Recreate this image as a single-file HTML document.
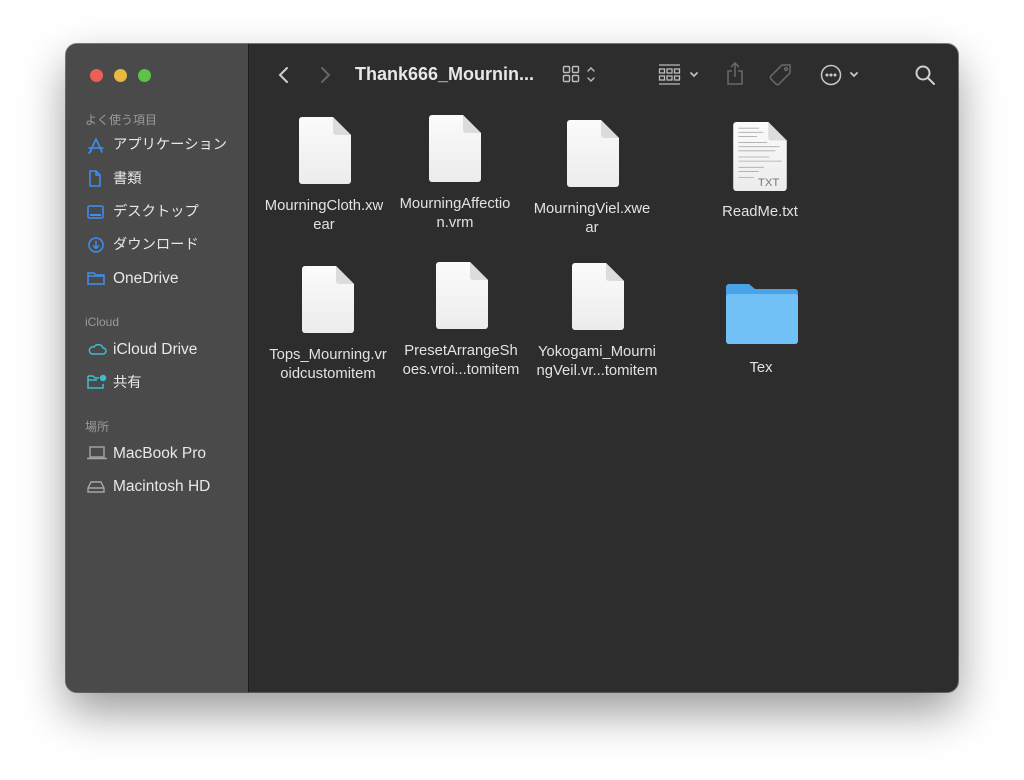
<!DOCTYPE html>
<html><head><meta charset="utf-8"><style>
*{margin:0;padding:0;box-sizing:border-box}
body{width:1024px;height:780px;background:#fff;position:relative;overflow:hidden;font-family:"Liberation Sans","Noto Sans CJK JP",sans-serif}
.win{position:absolute;left:66px;top:44px;width:892px;height:648px;border-radius:11px;background:#2d2d2d;overflow:hidden;box-shadow:0 20px 45px rgba(0,0,0,.4),0 0 0 1px rgba(0,0,0,.5)}
.side{position:absolute;left:0;top:0;width:183px;height:648px;background:#4a4a4a;border-right:1px solid #1c1c1c}
.dot{position:absolute;top:25px;width:13px;height:13px;border-radius:50%}
.sec{position:absolute;left:19px;font-size:12px;color:#9a9a9a}
.it{position:absolute;left:47px;font-size:15.5px;color:#e8e8e8;line-height:18px}
.jp{font-size:14.3px}
.ic{position:absolute;left:21px}
.lab{position:absolute;width:140px;text-align:center;font-size:14.8px;line-height:18.5px;color:#e2e2e2}
.file{position:absolute;width:52px;height:67px}
</style></head><body>
<div class="win">
<div class="side">
<div class="dot" style="left:24px;background:#ec5f57"></div>
<div class="dot" style="left:48px;background:#e9b83f"></div>
<div class="dot" style="left:72px;background:#5bc347"></div>
<div class="sec" style="top:67px">よく使う項目</div>
<svg class="ic" style="top:93px" width="18" height="18" viewBox="0 0 18 18" fill="none" stroke="#3d8ff0" stroke-width="1.6" stroke-linecap="round"><path d="M9 2L3 15M9 2l6 13M2 11h14M4 14l-2 2"/></svg>
<div class="it jp" style="top:92px">アプリケーション</div>
<svg class="ic" style="top:126px" width="16" height="18" viewBox="0 0 16 18" fill="none" stroke="#3d8ff0" stroke-width="1.5"><path d="M3 1h6l4 4v11H3zM9 1v4h4"/></svg>
<div class="it jp" style="top:126px">書類</div>
<svg class="ic" style="top:160px" width="18" height="16" viewBox="0 0 18 16" fill="none" stroke="#3d8ff0" stroke-width="1.5"><rect x="1" y="2" width="15" height="12" rx="1.5"/><path d="M3 11h11" stroke-width="2"/></svg>
<div class="it jp" style="top:159px">デスクトップ</div>
<svg class="ic" style="top:192px" width="18" height="18" viewBox="0 0 18 18" fill="none" stroke="#3d8ff0" stroke-width="1.5"><circle cx="9" cy="9" r="7"/><path d="M9 5v7M6 9.5l3 3 3-3"/></svg>
<div class="it jp" style="top:192px">ダウンロード</div>
<svg class="ic" style="top:226px" width="18" height="16" viewBox="0 0 18 16" fill="none" stroke="#3d8ff0" stroke-width="1.5"><path d="M1 3h6l2 2h8v9H1zM1 6h16"/></svg>
<div class="it" style="top:226px">OneDrive</div>
<div class="sec" style="top:271px">iCloud</div>
<svg class="ic" style="top:297px" width="20" height="16" viewBox="0 0 20 16" fill="none" stroke="#3fbcd0" stroke-width="1.5"><path d="M5 13h11a3 3 0 000-6 5 5 0 00-9-1A3.5 3.5 0 005 13z"/></svg>
<div class="it" style="top:297px">iCloud Drive</div>
<svg class="ic" style="top:329px" width="20" height="18" viewBox="0 0 20 18" fill="none" stroke="#3fbcd0" stroke-width="1.5"><path d="M1 3h5l2 2h4M1 3v12h15V11M1 7h9"/><circle cx="16" cy="5" r="2.5" fill="#3fbcd0"/></svg>
<div class="it jp" style="top:330px">共有</div>
<div class="sec" style="top:374px">場所</div>
<svg class="ic" style="top:402px" width="20" height="14" viewBox="0 0 20 14" fill="none" stroke="#a5a5a5" stroke-width="1.4"><rect x="3" y="1" width="14" height="10"/><path d="M0 12.5h20"/></svg>
<div class="it" style="top:401px">MacBook Pro</div>
<svg class="ic" style="top:436px" width="18" height="14" viewBox="0 0 18 14" fill="none" stroke="#a5a5a5" stroke-width="1.4"><path d="M4 2h10l3 6v4H1V8zM1 8h16"/></svg>
<div class="it" style="top:434px">Macintosh HD</div>
</div>
<svg style="position:absolute;left:211px;top:22px" width="14" height="18" viewBox="0 0 14 18" fill="none" stroke="#d0d0d0" stroke-width="2" stroke-linecap="round"><path d="M10 2L3 9l7 7"/></svg>
<svg style="position:absolute;left:252px;top:22px" width="14" height="18" viewBox="0 0 14 18" fill="none" stroke="#666" stroke-width="2" stroke-linecap="round"><path d="M4 2l7 7-7 7"/></svg>
<div style="position:absolute;left:289px;top:20px;font-size:18px;font-weight:bold;color:#e8e8e8">Thank666_Mournin...</div>
<svg style="position:absolute;left:496px;top:20px" width="42" height="22" viewBox="0 0 42 22" fill="none" stroke="#bdbdbd" stroke-width="1.4"><rect x="1.5" y="2.5" width="6" height="6" rx="1"/><rect x="10.5" y="2.5" width="6" height="6" rx="1"/><rect x="1.5" y="11.5" width="6" height="6" rx="1"/><rect x="10.5" y="11.5" width="6" height="6" rx="1"/><path d="M26 7l3-3 3 3M26 14l3 3 3-3" stroke-linecap="round"/></svg>
<svg style="position:absolute;left:592px;top:20px" width="44" height="22" viewBox="0 0 44 22" fill="none" stroke="#bdbdbd" stroke-width="1.3"><path d="M1 1h21M1 20h21"/><rect x="1.5" y="5" width="5" height="4"/><rect x="9" y="5" width="5" height="4"/><rect x="16.5" y="5" width="5" height="4"/><rect x="1.5" y="12" width="5" height="4"/><rect x="9" y="12" width="5" height="4"/><rect x="16.5" y="12" width="5" height="4"/><path d="M33 9l3 3 3-3" stroke-width="1.8" stroke-linecap="round"/></svg>
<svg style="position:absolute;left:658px;top:18px" width="22" height="24" viewBox="0 0 22 24" fill="none" stroke="#6a6a6a" stroke-width="1.5"><path d="M8 9H4v13h14V9h-4M11 1v14M7 5l4-4 4 4"/></svg>
<svg style="position:absolute;left:702px;top:19px" width="26" height="24" viewBox="0 0 26 24" fill="none" stroke="#6a6a6a" stroke-width="1.5"><path d="M14 2h8v8L11 21a2 2 0 01-3 0l-5-5a2 2 0 010-3z"/><circle cx="18" cy="6" r="1.4"/></svg>
<svg style="position:absolute;left:754px;top:20px" width="42" height="22" viewBox="0 0 42 22" fill="none" stroke="#c8c8c8" stroke-width="1.5"><circle cx="11" cy="11" r="9.5"/><circle cx="7" cy="11" r=".8" fill="#c8c8c8"/><circle cx="11" cy="11" r=".8" fill="#c8c8c8"/><circle cx="15" cy="11" r=".8" fill="#c8c8c8"/><path d="M31 9l3 3 3-3" stroke-width="1.8" stroke-linecap="round"/></svg>
<svg style="position:absolute;left:848px;top:20px" width="22" height="22" viewBox="0 0 22 22" fill="none" stroke="#d0d0d0" stroke-width="2"><circle cx="9" cy="9" r="6.5"/><path d="M14 14l6 6" stroke-linecap="round"/></svg>
</div>
<svg width="0" height="0" style="position:absolute"><defs><linearGradient id="g" x1="0" y1="0" x2="0" y2="1"><stop offset="0" stop-color="#fbfbfb"/><stop offset="1" stop-color="#ececec"/></linearGradient></defs></svg>
<svg class="file" style="left:299px;top:117px" viewBox="0 0 52 67"><path d="M3 0h31l18 18v46a3 3 0 01-3 3H3a3 3 0 01-3-3V3a3 3 0 013-3z" fill="url(#g)"/><path d="M34 0v15a3 3 0 003 3h15z" fill="#dcdcdc"/></svg>
<div class="lab" style="left:254px;top:197px">MourningCloth.xw<br>ear</div>
<svg class="file" style="left:429px;top:115px" viewBox="0 0 52 67"><path d="M3 0h31l18 18v46a3 3 0 01-3 3H3a3 3 0 01-3-3V3a3 3 0 013-3z" fill="url(#g)"/><path d="M34 0v15a3 3 0 003 3h15z" fill="#dcdcdc"/></svg>
<div class="lab" style="left:385px;top:195px">MourningAffectio<br>n.vrm</div>
<svg class="file" style="left:567px;top:120px" viewBox="0 0 52 67"><path d="M3 0h31l18 18v46a3 3 0 01-3 3H3a3 3 0 01-3-3V3a3 3 0 013-3z" fill="url(#g)"/><path d="M34 0v15a3 3 0 003 3h15z" fill="#dcdcdc"/></svg>
<div class="lab" style="left:522px;top:200px">MourningViel.xwe<br>ar</div>
<svg class="file" style="left:733px;top:122px;width:54px;height:69px" viewBox="0 0 52 67"><path d="M3 0h31l18 18v46a3 3 0 01-3 3H3a3 3 0 01-3-3V3a3 3 0 013-3z" fill="url(#g)"/><path d="M34 0v15a3 3 0 003 3h15z" fill="#dcdcdc"/><g stroke="#aaa" stroke-width=".8"><path d="M5 6h20M5 10h24M5 14h18M5 20h28M5 24h40M5 28h36M5 34h30M5 38h42M5 44h25M5 48h20M5 54h15"/></g><text x="24" y="62" font-size="11" fill="#777" font-family="Liberation Sans">TXT</text></svg>
<div class="lab" style="left:690px;top:203px">ReadMe.txt</div>
<svg class="file" style="left:302px;top:266px" viewBox="0 0 52 67"><path d="M3 0h31l18 18v46a3 3 0 01-3 3H3a3 3 0 01-3-3V3a3 3 0 013-3z" fill="url(#g)"/><path d="M34 0v15a3 3 0 003 3h15z" fill="#dcdcdc"/></svg>
<div class="lab" style="left:258px;top:346px">Tops_Mourning.vr<br>oidcustomitem</div>
<svg class="file" style="left:436px;top:262px" viewBox="0 0 52 67"><path d="M3 0h31l18 18v46a3 3 0 01-3 3H3a3 3 0 01-3-3V3a3 3 0 013-3z" fill="url(#g)"/><path d="M34 0v15a3 3 0 003 3h15z" fill="#dcdcdc"/></svg>
<div class="lab" style="left:391px;top:342px">PresetArrangeSh<br>oes.vroi...tomitem</div>
<svg class="file" style="left:572px;top:263px" viewBox="0 0 52 67"><path d="M3 0h31l18 18v46a3 3 0 01-3 3H3a3 3 0 01-3-3V3a3 3 0 013-3z" fill="url(#g)"/><path d="M34 0v15a3 3 0 003 3h15z" fill="#dcdcdc"/></svg>
<div class="lab" style="left:527px;top:343px">Yokogami_Mourni<br>ngVeil.vr...tomitem</div>
<svg style="position:absolute;left:726px;top:284px" width="72" height="60" viewBox="0 0 72 60"><path d="M3 0h20l6 5h40a3 3 0 013 3v49a3 3 0 01-3 3H3a3 3 0 01-3-3V3a3 3 0 013-3z" fill="#4aa3e6"/><path d="M3 10h66a3 3 0 013 3v44a3 3 0 01-3 3H3a3 3 0 01-3-3V13a3 3 0 013-3z" fill="#72c1f6"/></svg>
<div class="lab" style="left:691px;top:359px">Tex</div>
</body></html>
